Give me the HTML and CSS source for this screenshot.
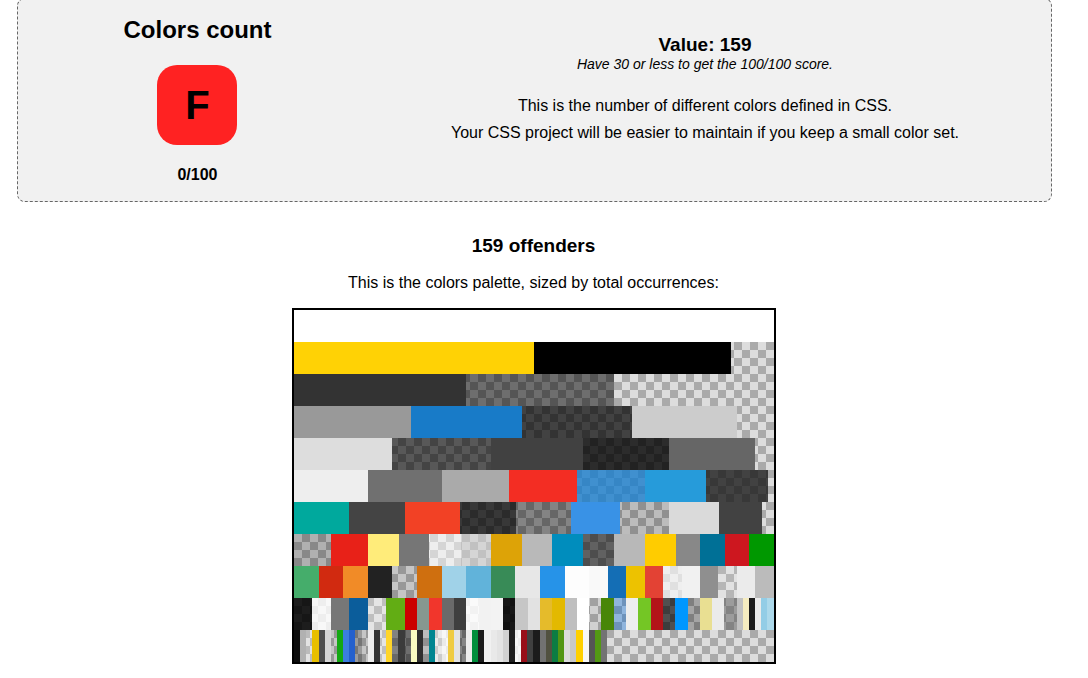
FILE: index.html
```html
<!DOCTYPE html>
<html lang="en">
<head>
<meta charset="utf-8">
<title>Colors count</title>
<link rel="stylesheet" href="styles.css">
</head>
<body>
<main class="page">
  <section class="summary">
    <div class="score">
      <h1 class="score-title">Colors count</h1>
      <div class="grade">F</div>
      <p class="score-value">0/100</p>
    </div>
    <div class="details">
      <h2 class="value">Value: 159</h2>
      <p class="hint">Have 30 or less to get the 100/100 score.</p>
      <div class="description">
        <p>This is the number of different colors defined in CSS.</p>
        <p>Your CSS project will be easier to maintain if you keep a small color set.</p>
      </div>
    </div>
  </section>
  <section class="offenders">
    <h2 class="offenders-title">159 offenders</h2>
    <p class="offenders-text">This is the colors palette, sized by total occurrences:</p>
    <div class="palette" id="palette"></div>
  </section>
</main>
<script src="palette.js"></script>
</body>
</html>
```
FILE: styles.css
```css
* {
  box-sizing: border-box;
}

body {
  margin: 0;
  background: #fff;
  color: #000;
  font: 16px/27px "Liberation Sans", Arial, sans-serif;
  text-align: center;
}

h1, h2, p {
  margin: 0;
}

.page {
  margin: -2px 36px 0 17px;
}

.summary {
  display: grid;
  grid-template-columns: 7fr 15fr;
  padding: 16px 0 13px 18px;
  border: 1px dashed #666;
  border-radius: 8px;
  background: #f1f1f1;
}

.score {
  display: flex;
  flex-direction: column;
  align-items: center;
}

.score-title {
  font-size: 24px;
  line-height: 30px;
}

.grade {
  width: 80px;
  height: 80px;
  margin: 20px 0 16px;
  border-radius: 20px;
  background: #f22;
  font-size: 40px;
  font-weight: bold;
  line-height: 80px;
}

.score-value {
  font-weight: bold;
}

.details {
  padding-top: 19px;
}

.value {
  font-size: 19px;
  line-height: 22px;
}

.hint {
  font-size: 14px;
  font-style: italic;
  line-height: 16px;
}

.description {
  margin-top: 20px;
}

.offenders {
  padding: 32px 2px 0 0;
}

.offenders-title {
  font-size: 19px;
  line-height: 24px;
}

.offenders-text {
  margin: 11px 0 12px;
}

.palette {
  width: 484px;
  margin: 0 auto;
  border: 2px solid #000;
  background-color: #ddd;
  background-image:
    linear-gradient(45deg, #aaa 25%, transparent 25%, transparent 75%, #aaa 75%),
    linear-gradient(45deg, #aaa 25%, transparent 25%, transparent 75%, #aaa 75%);
  background-origin: padding-box;
  background-position: 0 0, 8px 8px;
  background-size: 16px 16px;
}

.palette-row {
  display: flex;
  height: 32px;
}
```
FILE: palette.js
```js
// Each row lists "width color" pairs, separated by semicolons.
// "k.5" is black at 50% opacity, "w.5" is white at 50% opacity.
const rows = [
  "480 #fff",
  "240 #ffd205;197 #000",
  "172 #333;148 k.5",
  "117 #999;111 #187bc8;110 k.7;105 #ccc",
  "98 #ddd;99 k.6;92 #414141;86 k.8;86 #666",
  "74 #eee;74 #707070;67 #aaa;68 #f32d23;68 rgba(25,125,204,.8);61 #269bda;62 rgba(28,28,28,.8)",
  "55 #00a99d;56 #444;55 #f24125;56 k.75;55 k.4;49 #3992e6;49 k.15;50 #dadada;43 #424242",
  "37 k.2;37 #e82118;31 #ffec7a;30 #767676;32 w.5;30 rgba(208,208,208,.6);31 #dda307;30 #b9b9b9;31 #008dbd;31 rgba(15,15,15,.6);31 #b8b8b8;31 #fc0;24 #888;25 #007096;24 #cd171f;25 #009800",
  "25 #45ad6b;24 #d12a10;25 #f18b27;24 #222;25 k.1;25 #cf6f0f;24 #a0d2e8;25 #61b3da;24 #388b57;25 #e7e7e7;25 #2693e8;24 #fdfdfd;19 #f9f9f9;18 #146eb5;19 #edc200;18 #e34234;19 rgba(247,247,247,.7);18 #f1f1f1;18 #8f8f8f;19 w.15;18 #ebebeb;19 #bbb",
  "18 k.87;19 w.8;18 #777;19 #0b5d9b;18 w.25;19 #62ad14;12 #c00;12 #869790;13 #f1362c;12 #6a6a6a;12 #3f3f3f;13 w.85;12 #f2f2f2;12 #f3f3f3;12 k.9;13 #c6c6c6;12 #e2e2e2;12 #e5bb2b;13 #e3b900;12 #bfbfbf;12 #fff;12 k.05;13 #488608;12 rgba(0,105,220,.35);12 #eee;13 #74c625;12 #b31419;12 k.64;13 #0097ff;12 k.25;12 #e9df92;12 #ebebeb;13 rgba(91,91,91,.5);6 #c1c1c1;6 #f5ecc0;6 #1c1c1c;6 #ebebeb;6 #93cde6;7 #acd9eb",
  "6 #0d0d0d;6 #b1b1b1;6 w.2;7 #e8bf00;6 #505050;6 #d7d7d7;6 k.1;6 #14a814;6 #3b7fe0;6 #2460cd;7 k.3;6 k.1;6 #ececec;6 #333;6 w.25;6 #ffd52a;6 rgba(40,40,40,.5);7 #3b3b3b;6 k.5;6 #f9fbc1;6 #2e2e2e;6 k.15;6 #008591;7 w.4;6 w.75;6 #efcb41;6 #e3e3e3;6 k.4;6 #ececec;6 #008e3c;6 #1c1c1c;7 #f1f1f1;6 #e9e9e9;6 #e3e3e3;6 #d1d1d1;6 #1f1f1f;6 w.8;6 #980f19;6 #404040;7 #1c1c1c;6 #727272;6 #515140;6 #0b7c43;6 #539614;6 #dcdcdc;6 #c9c9c9;7 #ffd000;6 #f8f8f8;6 #555;6 #539914;6 #737373"
];

function toCss(color) {
  if (color[0] === "k") return `rgba(0,0,0,${color.slice(1)})`;
  if (color[0] === "w") return `rgba(255,255,255,${color.slice(1)})`;
  return color;
}

const palette = document.getElementById("palette");
for (const row of rows) {
  const line = document.createElement("div");
  line.className = "palette-row";
  for (const entry of row.split(";")) {
    const [width, color] = entry.split(" ");
    const swatch = document.createElement("div");
    swatch.style.width = `${width}px`;
    swatch.style.backgroundColor = toCss(color);
    line.append(swatch);
  }
  palette.append(line);
}
```
